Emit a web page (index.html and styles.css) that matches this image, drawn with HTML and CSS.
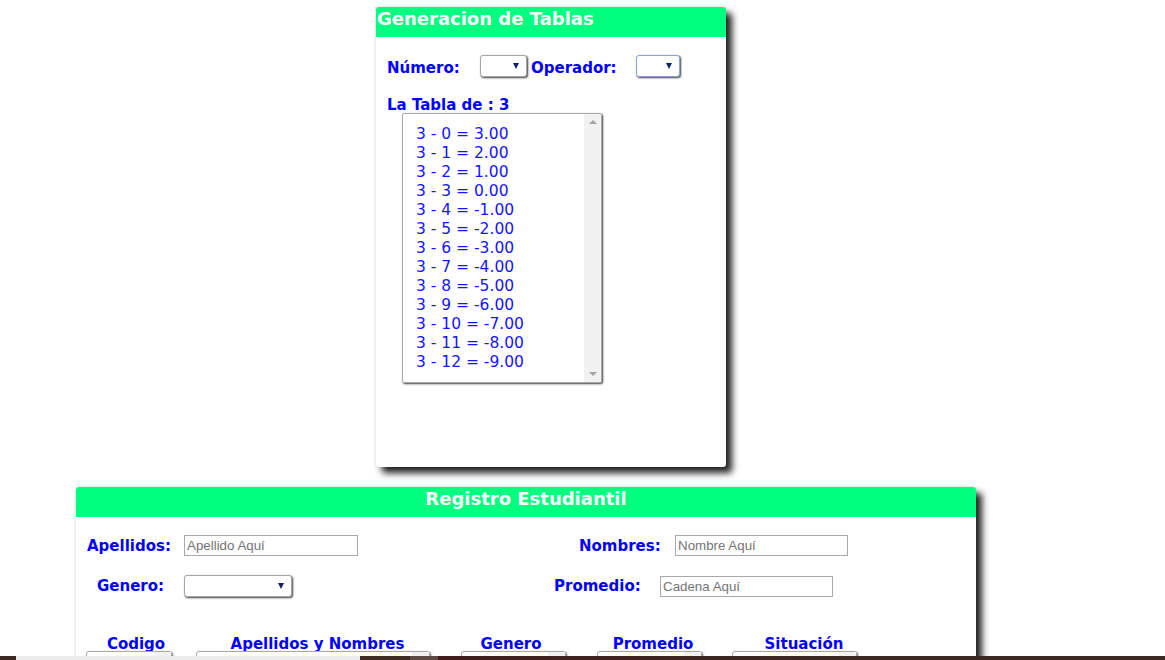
FILE: index.html
```html
<!DOCTYPE html>
<html lang="es">
<head>
<meta charset="utf-8">
<title>Tablas y Registro</title>
<link rel="stylesheet" href="styles.css">
</head>
<body>
<main class="page">
  <section class="card card-tablas">
    <h2 class="card-title">Generacion de Tablas</h2>
    <div class="card-body">
      <div class="op-row">
        <label class="lbl lbl-num">Número:</label>
        <span class="sel sel-num"><select></select></span>
        <label class="lbl lbl-op">Operador:</label>
        <span class="sel sel-op focused"><select></select></span>
      </div>
      <div class="lbl tabla-title">La Tabla de : 3</div>
      <div class="listbox">
        <ul class="list-items">
          <li>3 - 0 = 3.00</li>
          <li>3 - 1 = 2.00</li>
          <li>3 - 2 = 1.00</li>
          <li>3 - 3 = 0.00</li>
          <li>3 - 4 = -1.00</li>
          <li>3 - 5 = -2.00</li>
          <li>3 - 6 = -3.00</li>
          <li>3 - 7 = -4.00</li>
          <li>3 - 8 = -5.00</li>
          <li>3 - 9 = -6.00</li>
          <li>3 - 10 = -7.00</li>
          <li>3 - 11 = -8.00</li>
          <li>3 - 12 = -9.00</li>
        </ul>
        <div class="vscroll">
          <span class="arr-up"></span>
          <span class="arr-down"></span>
        </div>
      </div>
    </div>
  </section>

  <section class="card card-registro">
    <h2 class="card-title center">Registro Estudiantil</h2>
    <div class="card-body reg-body">
      <div class="form-row row-1">
        <label class="lbl w-apellidos">Apellidos:</label>
        <input class="txt" type="text" placeholder="Apellido Aquí">
        <label class="lbl w-nombres">Nombres:</label>
        <input class="txt txt-nom" type="text" placeholder="Nombre Aquí">
      </div>
      <div class="form-row row-2">
        <label class="lbl w-genero">Genero:</label>
        <span class="sel sel-gen"><select></select></span>
        <label class="lbl w-promedio">Promedio:</label>
        <input class="txt txt-nom" type="text" placeholder="Cadena Aquí">
      </div>
      <div class="cols">
        <div class="col c1"><div class="lbl col-h">Codigo</div><div class="mlist"><span class="msb"></span></div></div>
        <div class="col c2"><div class="lbl col-h">Apellidos y Nombres</div><div class="mlist"><span class="msb"></span></div></div>
        <div class="col c3"><div class="lbl col-h">Genero</div><div class="mlist"><span class="msb"></span></div></div>
        <div class="col c4"><div class="lbl col-h">Promedio</div><div class="mlist"><span class="msb"></span></div></div>
        <div class="col c5"><div class="lbl col-h">Situación</div><div class="mlist"><span class="msb"></span></div></div>
      </div>
    </div>
  </section>
</main>
<div class="bottom-strip"></div>
</body>
</html>
```
FILE: styles.css
```css
html, body {
  margin: 0;
  padding: 0;
  background: #ffffff;
}
body {
  font-family: "DejaVu Sans", Verdana, sans-serif;
  overflow: hidden;
}
.page {
  padding-top: 7px;
  padding-bottom: 40px;
}

/* Cards */
.card {
  background: #fff;
  border-radius: 3px;
  box-shadow: 6px 6px 7px rgba(0, 0, 0, 0.88), 0 0 4px rgba(0, 0, 0, 0.12);
}
.card-tablas {
  width: 350px;
  height: 460px;
  margin-left: 376px;
}
.card-registro {
  width: 900px;
  height: 300px;
  margin-left: 76px;
  margin-top: 20px;
}
.card-title {
  margin: 0;
  height: 30px;
  box-sizing: border-box;
  padding: 1px 1px 0;
  background: #00ff7f;
  color: #fff;
  font-size: 18px;
  font-weight: bold;
  line-height: 21px;
  border-radius: 3px 3px 0 0;
}
.card-title.center {
  text-align: center;
}
.card-body {
  padding: 18px 11px 0;
}

.lbl {
  color: #0000ff;
  font-weight: bold;
  font-size: 15px;
  line-height: 18px;
}

/* Selects */
.sel {
  position: relative;
  display: inline-block;
  box-sizing: border-box;
  height: 22px;
  border: 1px solid #a6a6a6;
  border-radius: 3px;
  background: #fff;
  box-shadow: 1px 1px 2px rgba(0, 0, 0, 0.75);
}
.sel select {
  appearance: none;
  -webkit-appearance: none;
  border: 0;
  background: transparent;
  width: 100%;
  height: 100%;
  outline: none;
}
.sel::after {
  content: "";
  position: absolute;
  top: 7px;
  right: 7px;
  border-left: 3px solid transparent;
  border-right: 3px solid transparent;
  border-top: 6px solid #13216b;
}
.sel.focused {
  border-color: #86a3dd;
}

/* Tablas card */
.op-row {
  display: flex;
  align-items: center;
  height: 22px;
}
.op-row .lbl {
  padding-top: 3px;
}
.lbl-num { width: 93px; flex: none; }
.sel-num { width: 47px; }
.lbl-op { width: 105px; flex: none; margin-left: 4px; }
.sel-op { width: 44px; }
.tabla-title {
  margin-top: 19px;
  padding-top: 1px;
  line-height: 16px;
}
.listbox {
  display: flex;
  margin-left: 15px;
  width: 200px;
  height: 270px;
  box-sizing: border-box;
  border: 1px solid #a9a9a9;
  border-radius: 2px;
  background: #fff;
  box-shadow: 1px 1px 2px rgba(0, 0, 0, 0.75);
}
.list-items {
  list-style: none;
  margin: 0;
  padding: 11px 0 0 13px;
  flex: 1;
  color: #1414ff;
  font-size: 15.5px;
  line-height: 19px;
}
.vscroll {
  width: 17px;
  background: #f1f1f1;
  display: flex;
  flex-direction: column;
  justify-content: space-between;
  align-items: center;
  padding: 6px 0 6px;
}
.arr-up {
  border-left: 4px solid transparent;
  border-right: 4px solid transparent;
  border-bottom: 4px solid #a3a3a3;
}
.arr-down {
  border-left: 4px solid transparent;
  border-right: 4px solid transparent;
  border-top: 4px solid #a3a3a3;
}

/* Registro card */
.reg-body {
  padding: 18px 0 0 0;
}
.form-row {
  display: flex;
  align-items: center;
}
.row-1 { height: 21px; }
.row-2 { height: 22px; margin-top: 19px; }

.w-apellidos { width: 97px; margin-left: 11px; }
.w-nombres { width: 96px; margin-left: 221px; }
.w-genero { width: 87px; margin-left: 21px; }
.w-promedio { width: 106px; margin-left: 262px; }

.txt {
  box-sizing: border-box;
  width: 174px;
  height: 21px;
  border: 1px solid #a9a9a9;
  padding: 1px 2px;
  margin: 0;
  font-family: "Liberation Sans", Arial, sans-serif;
  font-size: 13.33px;
  color: #000;
  outline: none;
}
.txt-nom { width: 173px; }
.txt::placeholder { color: #757575; }
.sel-gen { width: 108px; }

.cols {
  display: flex;
  margin-top: 37px;
}
.col {
  display: flex;
  flex-direction: column;
  align-items: flex-start;
}
.col-h {
  align-self: stretch;
  text-align: center;
  padding-top: 4px;
  line-height: 13px;
  white-space: nowrap;
}
.mlist {
  position: relative;
  box-sizing: border-box;
  height: 90px;
  border: 1px solid #a9a9a9;
  border-radius: 3px 3px 0 0;
  background: #fff;
  box-shadow: 1px 1px 2px rgba(0, 0, 0, 0.6);
}
.msb {
  position: absolute;
  top: 0;
  right: 0;
  bottom: 0;
  width: 17px;
  background: #f1f1f1;
}
.c1 { width: 100px; margin-left: 10px; }
.c1 .mlist { width: 86px; }
.c2 { width: 243px; margin-left: 10px; }
.c2 .mlist { width: 234px; }
.c3 { width: 100px; margin-left: 22px; }
.c3 .mlist { width: 105px; }
.c4 { width: 112px; margin-left: 36px; }
.c4 .mlist { width: 105px; }
.c5 { width: 144px; margin-left: 23px; }
.c5 .mlist { width: 125px; }

/* Bottom strip overlaying the page */
.bottom-strip {
  position: fixed;
  left: 0;
  right: 0;
  bottom: 0;
  height: 4px;
  background: linear-gradient(to right,
    #3b2a21 0, #3b2a21 16px,
    #ececec 16px, #ececec 360px,
    #3e2c22 360px, #3e2c22 410px,
    #5d4a45 410px, #5d4a45 438px,
    #411d1d 438px, #3d2522 700px,
    #3a2a22 900px, #3a2a22 100%);
}
```
